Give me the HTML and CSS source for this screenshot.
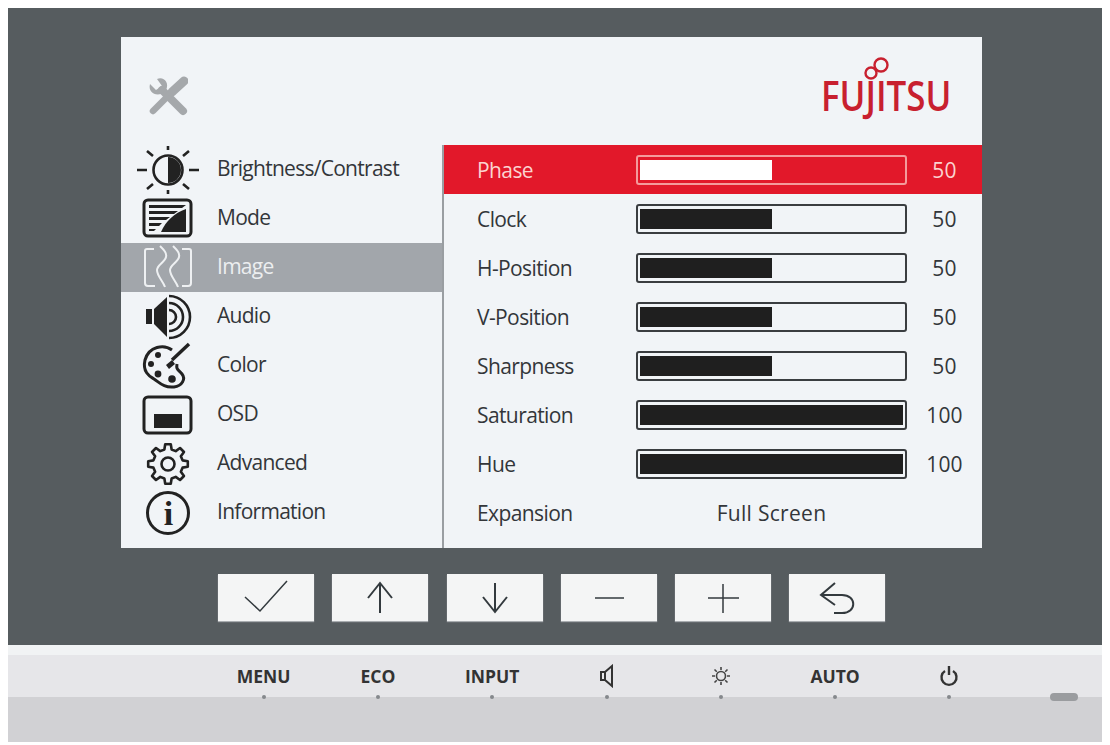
FILE: index.html
```html
<!DOCTYPE html>
<html lang="en">
<head>
    <meta charset="UTF-8">
    <title>Monitor OSD</title>
    <link rel="stylesheet" href="styles.css">
</head>
<body>

<div class="panel">
    <div class="screen">
        <div class="screen-top">
            <svg class="tools" width="40" height="40" viewBox="0 0 40 40">
                <path d="M14 14 L35 35" stroke="#a5a8ab" stroke-width="8" stroke-linecap="round" fill="none"/>
                <path d="M2 8 L8 14 L14 10 L9 3 C15 0 22 6 18 14 L13 18 C6 20 0 15 2 8 Z" fill="#a5a8ab"/>
                <path d="M5 35 L25 15" stroke="#a5a8ab" stroke-width="6.5" stroke-linecap="round" fill="none"/>
                <path d="M24 16 L36 5" stroke="#a5a8ab" stroke-width="9" stroke-linecap="round" fill="none"/>
            </svg>
            <div class="logo">
                <span class="logo-text">FUJITSU</span>
                <svg class="logo-loop" width="30" height="28" viewBox="0 0 30 28">
                    <circle cx="18" cy="9" r="6.5" fill="none" stroke="#c8202f" stroke-width="2.4"/>
                    <circle cx="8" cy="17" r="5.5" fill="none" stroke="#c8202f" stroke-width="2.4"/>
                </svg>
            </div>
        </div>
        <div class="columns">
            <div class="menu">
                <div class="menu-row">
                    <svg class="menu-icon" width="64" height="49" viewBox="0 0 64 49">
                        <circle cx="32" cy="25" r="14.5" fill="none" stroke="#222" stroke-width="2.6"/>
                        <path d="M32 12 A13 13 0 0 1 32 38 Z" fill="#222"/>
                        <path d="M1 25 H11 M53 25 H63 M32 1 V5 M32 45 V49 M11 6 L17 11 M53 6 L47 11 M11 44 L17 39 M53 44 L47 39" stroke="#222" stroke-width="2.6" fill="none"/>
                    </svg>
                    <span>Brightness/Contrast</span>
                </div>
                <div class="menu-row">
                    <svg class="menu-icon" width="64" height="49" viewBox="0 0 64 49">
                        <rect x="8" y="6" width="47" height="36" rx="4" fill="none" stroke="#222" stroke-width="3"/>
                        <path d="M13 11 H50 L46 14 H13 Z M13 17 H42 L38 20 H13 Z M13 23 H34 L30 26 H13 Z M13 29 H26 L23 32 H13 Z M13 35 H20 L18 37 H13 Z" fill="#222"/>
                        <path d="M50 15 V38 H25 C30 27 38 19 50 15 Z" fill="#222"/>
                    </svg>
                    <span>Mode</span>
                </div>
                <div class="menu-row is-current">
                    <svg class="menu-icon" width="64" height="49" viewBox="0 0 64 49">
                        <path d="M18 6 H11 Q9 6 9 8 V40 Q9 43 12 43 H19 M46 6 H53 Q55 6 55 8 V40 Q55 43 52 43 H46" fill="none" stroke="#eef0f2" stroke-width="2"/>
                        <path d="M24 3 C28 7 31 10 30 14 C29 19 21 22 21 27 C21 33 27 38 29 44 M37 3 C41 7 44 10 43 14 C42 19 34 22 34 27 C34 33 40 38 42 44" fill="none" stroke="#eef0f2" stroke-width="2"/>
                    </svg>
                    <span>Image</span>
                </div>
                <div class="menu-row">
                    <svg class="menu-icon" width="64" height="49" viewBox="0 0 64 49">
                        <rect x="10" y="17" width="6" height="15" fill="#222"/>
                        <path d="M18 17 L31 5 V45 L18 32 Z" fill="#222"/>
                        <path d="M33 4 A21 21 0 0 1 33 46 M33 11 A14 14 0 0 1 33 39 M33 18 A7 7 0 0 1 33 32" fill="none" stroke="#222" stroke-width="2.6"/>
                    </svg>
                    <span>Audio</span>
                </div>
                <div class="menu-row">
                    <svg class="menu-icon" width="64" height="49" viewBox="0 0 64 49">
                        <path d="M36 9 C28 3 13 5 9 19 C6 32 15 36 18 38 C24 42 28 47 38 46 C46 45 50 38 46 33 C42 28 40 29 41 23" fill="none" stroke="#222" stroke-width="3"/>
                        <circle cx="22" cy="14" r="3" fill="#222"/>
                        <circle cx="15" cy="23" r="3" fill="#222"/>
                        <circle cx="22" cy="33" r="3.4" fill="#222"/>
                        <circle cx="36" cy="38" r="3.8" fill="#222"/>
                        <path d="M53 3 L36 19" stroke="#222" stroke-width="3.4" fill="none"/>
                        <path d="M36 19 L30 24 L33 28 L39 23 Z" fill="#222"/>
                    </svg>
                    <span>Color</span>
                </div>
                <div class="menu-row">
                    <svg class="menu-icon" width="64" height="49" viewBox="0 0 64 49">
                        <rect x="8" y="7" width="47" height="36" rx="4" fill="none" stroke="#222" stroke-width="3"/>
                        <rect x="18" y="24" width="28" height="14" fill="#222"/>
                    </svg>
                    <span>OSD</span>
                </div>
                <div class="menu-row">
                    <svg class="menu-icon" width="64" height="49" viewBox="0 0 64 49">
                        <g transform="translate(32 25)">
                            <polygon points="-3.63,-14.55 -2.78,-19.8 2.78,-19.8 3.63,-14.55 7.72,-12.86 12.03,-15.97 15.97,-12.03 12.86,-7.72 14.55,-3.63 19.8,-2.78 19.8,2.78 14.55,3.63 12.86,7.72 15.97,12.03 12.03,15.97 7.72,12.86 3.63,14.55 2.78,19.8 -2.78,19.8 -3.63,14.55 -7.72,12.86 -12.03,15.97 -15.97,12.03 -12.86,7.72 -14.55,3.63 -19.8,2.78 -19.8,-2.78 -14.55,-3.63 -12.86,-7.72 -15.97,-12.03 -12.03,-15.97 -7.72,-12.86" fill="none" stroke="#222" stroke-width="2.6" stroke-linejoin="round"/>
                            <circle r="6.5" fill="none" stroke="#222" stroke-width="2.6"/>
                        </g>
                    </svg>
                    <span>Advanced</span>
                </div>
                <div class="menu-row">
                    <svg class="menu-icon" width="64" height="49" viewBox="0 0 64 49">
                        <circle cx="32" cy="25" r="20.5" fill="none" stroke="#222" stroke-width="3"/>
                        <text class="info-i" x="32" y="37" text-anchor="middle">i</text>
                    </svg>
                    <span>Information</span>
                </div>
            </div>
            <div class="settings">
                <div class="setting is-active">
                    <span>Phase</span>
                    <div class="track"><div class="fill" style="width: 50%"></div></div>
                    <span class="value">50</span>
                </div>
                <div class="setting">
                    <span>Clock</span>
                    <div class="track"><div class="fill" style="width: 50%"></div></div>
                    <span class="value">50</span>
                </div>
                <div class="setting">
                    <span>H-Position</span>
                    <div class="track"><div class="fill" style="width: 50%"></div></div>
                    <span class="value">50</span>
                </div>
                <div class="setting">
                    <span>V-Position</span>
                    <div class="track"><div class="fill" style="width: 50%"></div></div>
                    <span class="value">50</span>
                </div>
                <div class="setting">
                    <span>Sharpness</span>
                    <div class="track"><div class="fill" style="width: 50%"></div></div>
                    <span class="value">50</span>
                </div>
                <div class="setting">
                    <span>Saturation</span>
                    <div class="track"><div class="fill" style="width: 100%"></div></div>
                    <span class="value">100</span>
                </div>
                <div class="setting">
                    <span>Hue</span>
                    <div class="track"><div class="fill" style="width: 100%"></div></div>
                    <span class="value">100</span>
                </div>
                <div class="setting">
                    <span>Expansion</span>
                    <span class="setting-text">Full Screen</span>
                </div>
            </div>
        </div>
    </div>

    <div class="buttons">
        <div class="btn">
            <svg width="96" height="47" viewBox="0 0 96 47"><path d="M27 23 L42 37 L69 7" class="btn-line"/></svg>
        </div>
        <div class="btn">
            <svg width="96" height="47" viewBox="0 0 96 47"><path d="M48 39 V9 M36 24 L48 9 L60 24" class="btn-line is-bold"/></svg>
        </div>
        <div class="btn">
            <svg width="96" height="47" viewBox="0 0 96 47"><path d="M48 9 V38 M36 23 L48 38 L60 23" class="btn-line is-bold"/></svg>
        </div>
        <div class="btn">
            <svg width="96" height="47" viewBox="0 0 96 47"><path d="M34 24 H63" class="btn-line"/></svg>
        </div>
        <div class="btn">
            <svg width="96" height="47" viewBox="0 0 96 47"><path d="M33 24 H64 M48 10 V39" class="btn-line"/></svg>
        </div>
        <div class="btn">
            <svg width="96" height="47" viewBox="0 0 96 47"><path d="M46 9 L32 21 L46 31 M32 21 H53 C68 21 68 39 53 39 H45" class="btn-line is-bold"/></svg>
        </div>
    </div>
</div>

<div class="bezel">
    <div class="bezel-strip"></div>
    <div class="bezel-keys">
        <div class="key"><span>MENU</span><i class="dot"></i></div>
        <div class="key"><span>ECO</span><i class="dot"></i></div>
        <div class="key"><span>INPUT</span><i class="dot"></i></div>
        <div class="key">
            <svg width="18" height="24" viewBox="0 0 18 24"><path d="M3 8 H7 L14 2 V22 L7 16 H3 Z M7 8 V16" fill="none" stroke="#333" stroke-width="2"/></svg>
            <i class="dot"></i>
        </div>
        <div class="key">
            <svg width="22" height="24" viewBox="0 0 22 24"><circle cx="11" cy="12" r="4.5" fill="none" stroke="#444" stroke-width="1.6"/><path d="M11 3 V6 M11 18 V21 M2 12 H5 M17 12 H20 M4.5 5.5 L6.8 7.8 M17.5 5.5 L15.2 7.8 M4.5 18.5 L6.8 16.2 M17.5 18.5 L15.2 16.2" stroke="#444" stroke-width="1.6" fill="none"/></svg>
            <i class="dot"></i>
        </div>
        <div class="key"><span>AUTO</span><i class="dot"></i></div>
        <div class="key">
            <svg width="20" height="24" viewBox="0 0 20 24"><path d="M6 7 A7.5 7.5 0 1 0 14 7 M10 2 V11" fill="none" stroke="#333" stroke-width="2.4"/></svg>
            <i class="dot"></i>
        </div>
        <i class="pill"></i>
    </div>
    <div class="bezel-base"></div>
</div>

</body>
</html>
```

FILE: styles.css
```css
body {
    margin: 8px 8px 3px;
    font-family: "Open Sans", sans-serif;
    background-color: #fff;
}
.panel {
    height: 637px;
    padding-top: 29px;
    box-sizing: border-box;
    background-color: #565c5f;
}
.screen {
    width: 861px;
    height: 511px;
    margin-left: 113px;
    background-color: #f1f4f7;
    display: flex;
    flex-direction: column;
}
.screen-top {
    height: 108px;
    flex-shrink: 0;
    display: flex;
    align-items: flex-start;
    justify-content: space-between;
    padding: 39px 35px 0 27px;
    box-sizing: border-box;
}
.logo {
    position: relative;
    width: 126px;
    height: 34px;
}
.logo-text {
    display: block;
    font-size: 42px;
    line-height: 38px;
    font-weight: 600;
    color: #c8202f;
    transform: scaleX(0.83);
    transform-origin: left center;
    white-space: nowrap;
}
.logo-loop {
    position: absolute;
    left: 42px;
    top: -20px;
}
.columns {
    flex-grow: 1;
    display: flex;
}
.menu {
    width: 321px;
    flex-shrink: 0;
    border-right: 2px solid #9a9ea2;
}
.menu-row {
    height: 49px;
    display: flex;
    align-items: center;
    padding-left: 15px;
    font-size: 21px;
    letter-spacing: -0.72px;
    color: #33363a;
}
.menu-row span {
    margin-left: 17px;
    position: relative;
    top: -2px;
}
.menu-icon {
    flex-shrink: 0;
}
.info-i {
    font-family: "Liberation Serif", serif;
    font-weight: bold;
    font-size: 34px;
    fill: #222;
}
.menu-row.is-current {
    background-color: #a2a6ab;
    color: #eceef0;
}
.settings {
    flex-grow: 1;
}
.setting {
    height: 49px;
    display: grid;
    grid-template-columns: 159px 271px 1fr;
    align-items: center;
    padding-left: 33px;
    box-sizing: border-box;
    font-size: 21px;
    letter-spacing: -0.6px;
    color: #33363a;
}
.setting.is-active {
    background-color: #e2182a;
    color: #fbd3d0;
}
.track {
    height: 30px;
    border: 2px solid #3a3d40;
    border-radius: 3px;
    padding: 3px 2px;
    box-sizing: border-box;
}
.fill {
    height: 100%;
    background-color: #1f1f1f;
}
.is-active .track {
    border-color: #f49a9c;
}
.is-active .fill {
    background-color: #fff;
}
.value {
    text-align: center;
    letter-spacing: 0.2px;
}
.setting-text {
    grid-column: 2 / 4;
    width: 271px;
    text-align: center;
    letter-spacing: 0.3px;
}
.buttons {
    display: flex;
    gap: 18.3px;
    margin: 26px 0 0 210px;
}
.btn {
    width: 96px;
    height: 47px;
    background-color: #f4f5f5;
    box-shadow: 0 1px 1px #a9adb0;
}
.btn svg {
    display: block;
}
.btn-line {
    fill: none;
    stroke: #333a3e;
    stroke-width: 1.5;
}
.btn-line.is-bold {
    stroke-width: 2;
}
.bezel-strip {
    height: 10px;
    background-color: #f1f3f4;
}
.bezel-keys {
    height: 42px;
    background-color: #e6e6e9;
    display: flex;
    padding-left: 198.5px;
}
.key {
    width: 114.3px;
    flex-shrink: 0;
    display: flex;
    flex-direction: column;
    align-items: center;
    justify-content: flex-end;
    font-size: 17.5px;
    font-weight: 700;
    color: #333;
}
.key span, .key svg {
    margin-bottom: 7px;
}
.dot {
    width: 4px;
    height: 4px;
    border-radius: 50%;
    background-color: #85888c;
    margin-bottom: -2px;
    position: relative;
}
.pill {
    align-self: flex-end;
    width: 28px;
    height: 8px;
    margin-left: 43.5px;
    margin-bottom: -4px;
    border-radius: 4px;
    background-color: #9a9c9f;
    position: relative;
}
.bezel-base {
    height: 45px;
    background-color: #d1d1d4;
}
```
